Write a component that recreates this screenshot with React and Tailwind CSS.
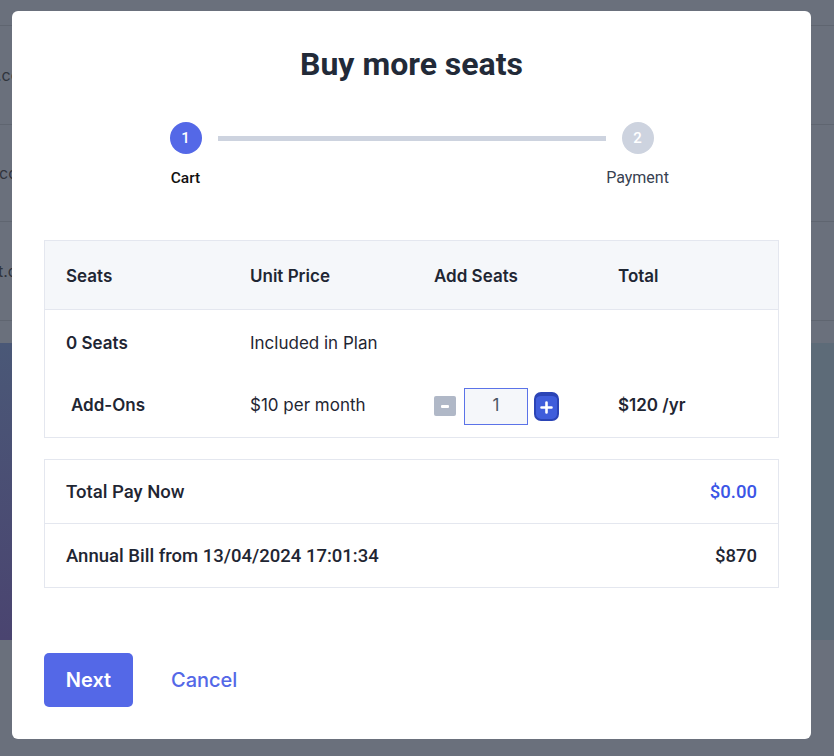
import React from "react";

const inter = { fontFamily: "Inter, 'Noto Sans', sans-serif" };
const roboto = { fontFamily: "Roboto, 'Noto Sans', sans-serif" };

function BgRow({ text, h, shift }) {
  return (
    <div className={`${h} border-b border-[#5f6570] flex items-center`}>
      <span className={`text-[16px] text-[#30343c] ${shift}`} style={inter}>{text}</span>
    </div>
  );
}

export default function App() {
  return (
    <div className="relative w-[834px] h-[756px] overflow-hidden bg-[#6a707c]">
      {/* background page under overlay */}
      <div className="flex flex-col">
        <div className="h-[26px] border-b border-[#5f6570]"></div>
        <BgRow text=".com" h="h-[99px]" shift="-ml-[3px]" />
        <BgRow text="com" h="h-[97px]" shift="-ml-[1px]" />
        <BgRow text="t.com" h="h-[99px]" shift="-ml-[2px]" />
        <div className="h-[22px]"></div>
        <div className="h-[297px] flex">
          <div className="w-[12px] bg-gradient-to-b from-[#4a5877] to-[#4a4470]"></div>
          <div className="flex-1 bg-[#55607a]"></div>
          <div className="w-[23px] bg-[#5d6b78]"></div>
        </div>
      </div>

      {/* modal */}
      <div className="absolute left-[12px] top-[11px] w-[799px] h-[728px] bg-white rounded-[6px] px-[32px] flex flex-col">
        <h1 className="pt-[34px] text-center text-[32px] leading-[38px] font-bold text-[#222a38]" style={roboto}>
          Buy more seats
        </h1>

        {/* stepper */}
        <div className="mt-[39px] mx-auto w-[484px] flex items-start" style={roboto}>
          <div className="w-8 flex flex-col items-center">
            <div className="w-8 h-8 rounded-full bg-[#5468e7] text-white text-[15px] font-medium flex items-center justify-center">1</div>
            <div className="mt-[13px] text-[15.5px] leading-[22px] font-medium text-[#111111] whitespace-nowrap">Cart</div>
          </div>
          <div className="flex-1 mx-4 mt-[14px] h-[5px] bg-[#cdd3df]"></div>
          <div className="w-8 flex flex-col items-center">
            <div className="w-8 h-8 rounded-full bg-[#cdd3df] text-white text-[15px] font-medium flex items-center justify-center">2</div>
            <div className="mt-[13px] text-[16px] leading-[22px] text-[#374151] whitespace-nowrap">Payment</div>
          </div>
        </div>

        {/* table 1 */}
        <div className="mt-[51px] border border-[#e4e7ef] text-[17px] text-[#1f2633]" style={inter}>
          <div className="h-[69px] pt-[3px] bg-[#f5f7fa] border-b border-[#e4e7ef] grid grid-cols-[184px_184px_184px_1fr] items-center font-semibold">
            <div className="pl-[21px]">Seats</div>
            <div className="pl-[21px]">Unit Price</div>
            <div className="pl-[21px]">Add Seats</div>
            <div className="pl-[21px]">Total</div>
          </div>
          <div className="h-[63px] grid grid-cols-[184px_184px_184px_1fr] items-center pt-[4px]">
            <div className="pl-[21px] font-semibold">0 Seats</div>
            <div className="pl-[21px]">Included in Plan</div>
            <div></div>
            <div></div>
          </div>
          <div className="h-[64px] grid grid-cols-[184px_184px_184px_1fr] items-center pt-[2px]">
            <div className="pl-[26px] font-semibold">Add-Ons</div>
            <div className="pl-[21px]">$10 per month</div>
            <div className="pl-[21px] flex items-center">
              <div className="w-[22px] h-[20px] rounded-[2px] bg-[#b0b8c7] flex items-center justify-center">
                <div className="w-[8px] h-[3px] bg-white rounded-[1px]"></div>
              </div>
              <div className="ml-[8px] w-[64px] h-[37px] border border-[#5b73e8] bg-[#f5f7fa] flex items-center justify-center text-[17px] text-[#4b5563]">1</div>
              <div className="ml-[6px] w-[25px] h-[29px] rounded-[7px] bg-[#3f5ddb] border-2 border-[#2b44b6] border-t-[4px] flex items-center justify-center">
                <svg width="13" height="13" viewBox="0 0 13 13">
                  <path d="M6.5 1.5v10M1.5 6.5h10" stroke="white" strokeWidth="2.6" strokeLinecap="round" />
                </svg>
              </div>
            </div>
            <div className="pl-[21px] font-semibold">$120 /yr</div>
          </div>
        </div>

        {/* table 2 */}
        <div className="mt-[21px] border border-[#e4e7ef] text-[18.5px] font-medium text-[#1f2633]" style={roboto}>
          <div className="h-[64px] pt-[2px] border-b border-[#e4e7ef] flex items-center justify-between px-[21px]">
            <span>Total Pay Now</span>
            <span className="text-[#3b55e6]">$0.00</span>
          </div>
          <div className="h-[63px] pt-[2px] flex items-center justify-between px-[21px]">
            <span>Annual Bill from 13/04/2024 17:01:34</span>
            <span>$870</span>
          </div>
        </div>

        {/* buttons */}
        <div className="mt-[65px] flex items-center" style={inter}>
          <button className="w-[89px] h-[54px] rounded-[5px] bg-[#5468e7] text-white text-[20px] font-semibold">Next</button>
          <button className="ml-[38px] text-[20px] font-medium text-[#5468e7]">Cancel</button>
        </div>
      </div>
    </div>
  );
}
